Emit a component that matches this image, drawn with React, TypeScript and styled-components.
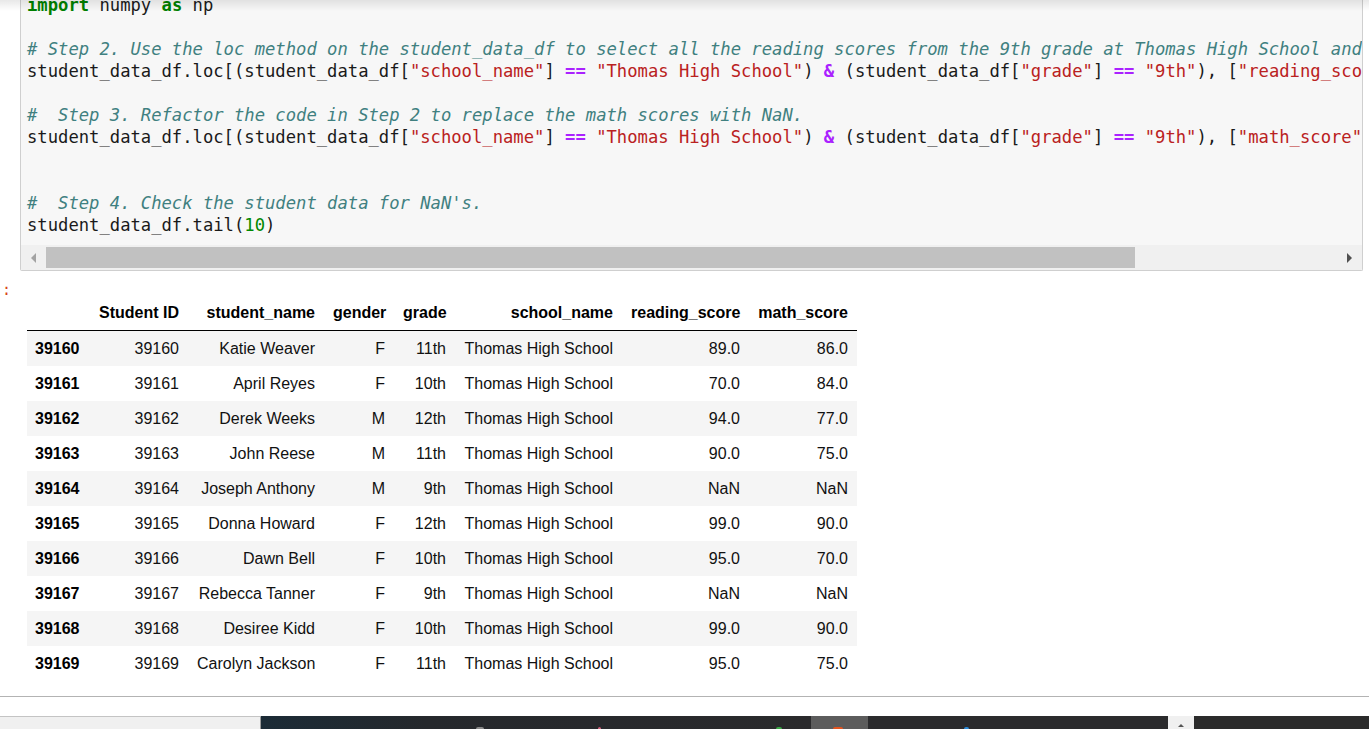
import React from "react";
import styled, { createGlobalStyle } from "styled-components";

const GlobalStyle = createGlobalStyle`
  html, body {
    margin: 0;
    padding: 0;
    background: #fff;
    overflow: hidden;
  }
`;

const Page = styled.div`
  position: relative;
  width: 1369px;
  height: 729px;
  overflow: hidden;
  display: flex;
  flex-direction: column;
  background: #fff;

  &::before {
    content: "";
    position: absolute;
    left: 0;
    right: 0;
    top: 0;
    height: 11px;
    background: linear-gradient(to bottom, rgba(0, 0, 0, 0.09), rgba(0, 0, 0, 0));
    z-index: 2;
  }
`;

const CodeRow = styled.div`
  padding: 0 6px 0 20px;
`;

const CodeCell = styled.div`
  margin-top: -6px;
  background: #f7f7f7;
  border: 1px solid #cfcfcf;
  border-top: none;
  border-radius: 0 0 2px 2px;
  overflow: hidden;
`;

const Code = styled.pre`
  margin: 0;
  padding: 0 0 9px 6px;
  font-family: "DejaVu Sans Mono", monospace;
  font-size: 17.2px;
  line-height: 22px;
  color: #1a1a1a;
  white-space: pre;
  overflow: hidden;
`;

const Kw = styled.span`
  color: #008000;
  font-weight: bold;
`;
const Str = styled.span`
  color: #ba2121;
`;
const Op = styled.span`
  color: #aa22ff;
  font-weight: bold;
`;
const Cm = styled.span`
  color: #408080;
  font-style: italic;
`;
const Num = styled.span`
  color: #008800;
`;

const Track = styled.div`
  height: 25px;
  background: #f0f0f0;
  display: flex;
  align-items: stretch;
  padding: 2px 0;
  box-sizing: border-box;
`;

const ArrowBtn = styled.div<{ $dir: "left" | "right"; $active?: boolean }>`
  width: 25px;
  flex: none;
  display: flex;
  align-items: center;
  justify-content: center;

  &::after {
    content: "";
    width: 0;
    height: 0;
    border-top: 5px solid transparent;
    border-bottom: 5px solid transparent;
    ${(p) =>
      p.$dir === "left"
        ? `border-right: 5px solid ${p.$active ? "#505050" : "#a3a3a3"};`
        : `border-left: 5px solid ${p.$active ? "#505050" : "#a3a3a3"};`}
  }
`;

const Thumb = styled.div`
  width: 1089px;
  background: #c1c1c1;
  flex: none;
`;

const TrackRest = styled.div`
  flex: 1;
`;

const OutputRow = styled.div`
  display: flex;
  align-items: flex-start;
`;

const Prompt = styled.div`
  width: 20px;
  flex: none;
  padding: 10px 0 0 2px;
  box-sizing: border-box;
  font-family: "DejaVu Sans Mono", monospace;
  font-size: 15px;
  line-height: 18px;
  color: #d84315;
`;

const Table = styled.table`
  margin: 25px 0 0 7px;
  border-collapse: collapse;
  table-layout: fixed;
  width: 830px;
  font-family: "Liberation Sans", Arial, sans-serif;
  font-size: 16px;
  color: #000;
`;

const HeadCell = styled.th`
  height: 34px;
  padding: 0 9px;
  text-align: right;
  font-weight: bold;
  border-bottom: 1px solid #000;
  white-space: nowrap;
  vertical-align: middle;
`;

const Row = styled.tr<{ $striped: boolean }>`
  background: ${(p) => (p.$striped ? "#f5f5f5" : "#fff")};
`;

const IndexCell = styled.th`
  height: 35px;
  padding: 0 8px;
  text-align: left;
  font-weight: bold;
  white-space: nowrap;
`;

const Cell = styled.td`
  height: 35px;
  padding: 0 9px;
  text-align: right;
  white-space: nowrap;
  color: #111;
`;

const Divider = styled.div`
  margin-top: 15px;
  border-top: 1px solid #b3b3b3;
`;

const Spacer = styled.div`
  flex: 1;
`;

const Taskbar = styled.div`
  height: 13px;
  display: flex;
  flex: none;
`;

const TaskSeg = styled.div<{ $w?: number; $bg: string }>`
  position: relative;
  ${(p) => (p.$w ? `width: ${p.$w}px; flex: none;` : "flex: 1;")}
  background: ${(p) => p.$bg};
`;

const LightSeg = styled(TaskSeg)`
  border-top: 1px solid #c4c4c4;
  border-right: 1px solid #9a9a9a;
  box-sizing: border-box;
`;

const TrayArrow = styled(TaskSeg)`
  display: flex;
  justify-content: center;

  &::after {
    content: "";
    margin-top: 8px;
    width: 0;
    height: 0;
    border-left: 3px solid transparent;
    border-right: 3px solid transparent;
    border-bottom: 3px solid #555;
  }
`;

const IconTip = styled.span<{ $x: number; $c: string; $w?: number }>`
  position: absolute;
  left: ${(p) => p.$x}px;
  bottom: 0;
  width: ${(p) => p.$w ?? 8}px;
  height: 2px;
  border-radius: 2px 2px 0 0;
  background: ${(p) => p.$c};
`;

const rows = [
  ["39160", "Katie Weaver", "F", "11th", "89.0", "86.0"],
  ["39161", "April Reyes", "F", "10th", "70.0", "84.0"],
  ["39162", "Derek Weeks", "M", "12th", "94.0", "77.0"],
  ["39163", "John Reese", "M", "11th", "90.0", "75.0"],
  ["39164", "Joseph Anthony", "M", "9th", "NaN", "NaN"],
  ["39165", "Donna Howard", "F", "12th", "99.0", "90.0"],
  ["39166", "Dawn Bell", "F", "10th", "95.0", "70.0"],
  ["39167", "Rebecca Tanner", "F", "9th", "NaN", "NaN"],
  ["39168", "Desiree Kidd", "F", "10th", "99.0", "90.0"],
  ["39169", "Carolyn Jackson", "F", "11th", "95.0", "75.0"],
];

const colWidths = [63, 98, 136, 70, 61, 167, 127, 108];
const headers = ["", "Student ID", "student_name", "gender", "grade", "school_name", "reading_score", "math_score"];

function LocLine({ col }: { col: string }) {
  return (
    <>
      student_data_df.loc[(student_data_df[<Str>"school_name"</Str>] <Op>==</Op>{" "}
      <Str>"Thomas High School"</Str>) <Op>&amp;</Op> (student_data_df[<Str>"grade"</Str>]{" "}
      <Op>==</Op> <Str>"9th"</Str>), [<Str>"{col}"</Str>]] <Op>=</Op> np.nan
    </>
  );
}

export default function App() {
  return (
    <Page>
      <GlobalStyle />
      <CodeRow>
        <CodeCell>
          <Code>
            <Kw>import</Kw> numpy <Kw>as</Kw> np{"\n"}
            {"\n"}
            <Cm>
              # Step 2. Use the loc method on the student_data_df to select all the reading scores from the 9th grade
              at Thomas High School and replace them with NaN.
            </Cm>
            {"\n"}
            <LocLine col="reading_score" />
            {"\n"}
            {"\n"}
            <Cm>#  Step 3. Refactor the code in Step 2 to replace the math scores with NaN.</Cm>
            {"\n"}
            <LocLine col="math_score" />
            {"\n"}
            {"\n"}
            {"\n"}
            <Cm>#  Step 4. Check the student data for NaN's.</Cm>
            {"\n"}
            student_data_df.tail(<Num>10</Num>)
          </Code>
          <Track>
            <ArrowBtn $dir="left" />
            <Thumb />
            <TrackRest />
            <ArrowBtn $dir="right" $active />
          </Track>
        </CodeCell>
      </CodeRow>

      <OutputRow>
        <Prompt>:</Prompt>
        <Table>
          <colgroup>
            {colWidths.map((w, i) => (
              <col key={i} style={{ width: w }} />
            ))}
          </colgroup>
          <thead>
            <tr>
              {headers.map((h, i) => (
                <HeadCell key={i}>{h}</HeadCell>
              ))}
            </tr>
          </thead>
          <tbody>
            {rows.map((r, i) => (
              <Row key={r[0]} $striped={i % 2 === 0}>
                <IndexCell>{r[0]}</IndexCell>
                <Cell>{r[0]}</Cell>
                <Cell>{r[1]}</Cell>
                <Cell>{r[2]}</Cell>
                <Cell>{r[3]}</Cell>
                <Cell>Thomas High School</Cell>
                <Cell>{r[4]}</Cell>
                <Cell>{r[5]}</Cell>
              </Row>
            ))}
          </tbody>
        </Table>
      </OutputRow>

      <Divider />
      <Spacer />

      <Taskbar>
        <LightSeg $w={261} $bg="#f0f0f0" />
        <TaskSeg $w={550} $bg="linear-gradient(to right, #1b2b36 0%, #25282c 30%, #2a2a2c 100%)">
          <IconTip $x={215} $c="#8a8a8a" />
          <IconTip $x={337} $c="#d0607a" $w={3} />
          <IconTip $x={515} $c="#3aa845" $w={6} />
        </TaskSeg>
        <TaskSeg $w={57} $bg="#5c5c5c">
          <IconTip $x={22} $c="#e2541f" $w={10} />
        </TaskSeg>
        <TaskSeg $w={300} $bg="#2b2b2d">
          <IconTip $x={96} $c="#2a8ad8" $w={5} />
        </TaskSeg>
        <TrayArrow $w={26} $bg="#f0f0f0" />
        <TaskSeg $bg="#2b2b2b" />
      </Taskbar>
    </Page>
  );
}
